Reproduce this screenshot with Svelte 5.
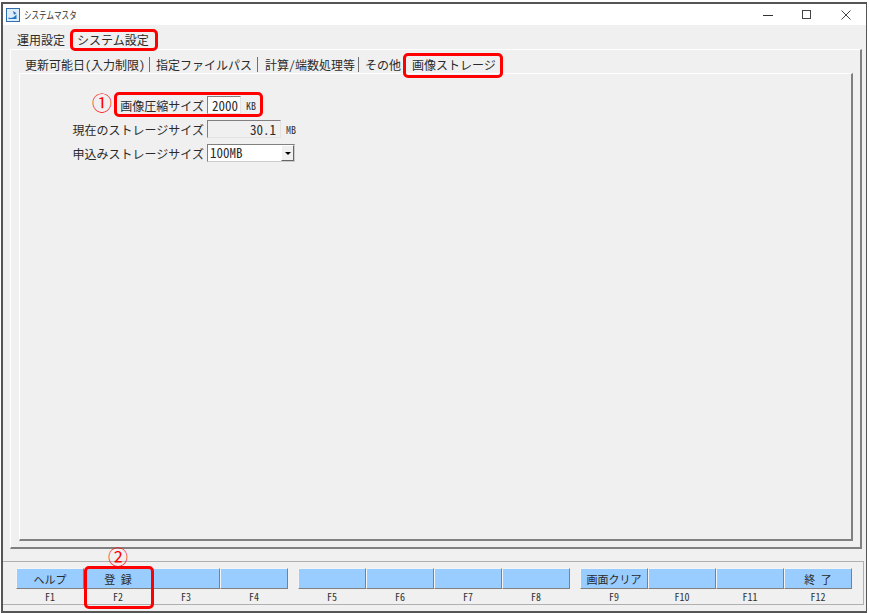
<script lang="ts">
  const outerTabs = ["運用設定", "システム設定"];
  const innerTabs = ["更新可能日(入力制限)", "指定ファイルパス", "計算/端数処理等", "その他", "画像ストレージ"];
  const fnGroups = [
    [{ key: "F1", label: "ヘルプ" }, { key: "F2", label: "登　録" }, { key: "F3", label: "" }, { key: "F4", label: "" }],
    [{ key: "F5", label: "" }, { key: "F6", label: "" }, { key: "F7", label: "" }, { key: "F8", label: "" }],
    [{ key: "F9", label: "画面クリア" }, { key: "F10", label: "" }, { key: "F11", label: "" }, { key: "F12", label: "終　了" }],
  ];
</script>

<div class="window">
  <header class="titlebar">
    <svg class="app-icon" width="14" height="14" viewBox="0 0 14 14" aria-hidden="true">
      <rect x="0.5" y="0.5" width="13" height="13" fill="#dcecf8" stroke="#2f6fb0" />
      <path d="M7 3l3.5 2.2-2.5 1.6z" fill="#2f6fb0" />
      <path d="M2.5 9.5c2.5 1 5 .5 8-3v4.5h-8z" fill="#1e78c8" />
    </svg>
    <span class="title">システムマスタ</span>
    <div class="controls">
      <svg width="12" height="12" viewBox="0 0 12 12" aria-hidden="true"><path d="M1 6.5h10" stroke="#333" /></svg>
      <svg width="12" height="12" viewBox="0 0 12 12" aria-hidden="true"><rect x="1.5" y="1.5" width="8" height="8" fill="none" stroke="#444" /></svg>
      <svg width="12" height="12" viewBox="0 0 12 12" aria-hidden="true"><path d="M1.5 1.5l9 9M10.5 1.5l-9 9" stroke="#444" fill="none" /></svg>
    </div>
  </header>

  <main class="body">
    <nav class="outer-tabs">
      {#each outerTabs as tab}
        <span class="outer-tab">{tab}</span>
      {/each}
    </nav>

    <section class="outer-panel">
      <nav class="inner-tabs">
        {#each innerTabs as tab}
          <span class="inner-tab">{tab}</span>
        {/each}
      </nav>

      <div class="inner-panel">
        <div class="form">
          <span class="label">画像圧縮サイズ</span>
          <div class="field-row">
            <span class="input size-input">2000</span>
            <span class="unit">KB</span>
          </div>
          <span class="label">現在のストレージサイズ</span>
          <div class="field-row">
            <span class="input readonly">30.1</span>
            <span class="unit">MB</span>
          </div>
          <span class="label">申込みストレージサイズ</span>
          <div class="select">
            <span class="select-value">100MB</span>
            <span class="select-btn"><i class="arrow"></i></span>
          </div>
        </div>
      </div>
    </section>

    <footer class="fn-bar">
      {#each fnGroups as group}
        <div class="fn-group">
          {#each group as fn}
            <div class="fn">
              <button class="fn-btn">{fn.label}</button>
              <span class="fn-key">{fn.key}</span>
            </div>
          {/each}
        </div>
      {/each}
    </footer>
  </main>

  <!-- red annotations on top of the screen -->
  <span class="mark mark-outer"></span>
  <span class="mark mark-inner"></span>
  <span class="mark mark-field"></span>
  <span class="mark mark-fn"></span>
  <span class="num num-1">①</span>
  <span class="num num-2">②</span>
</div>

<style>
  :global(body) {
    margin: 0;
    background: #fff;
  }

  .window {
    position: relative;
    box-sizing: border-box;
    width: 866px;
    height: 611px;
    margin: 2px 0 0 1px;
    border: 2px solid #555;
    border-right-width: 1px;
    background: #f0f0f0;
    font-family: "Noto Sans CJK JP", sans-serif;
    font-feature-settings: "hwid";
    font-size: 12px;
    color: #2a2a2a;
    display: flex;
    flex-direction: column;
    overflow: hidden;
  }

  .titlebar {
    height: 21px;
    padding-left: 3px;
    background: #fff;
    display: flex;
    align-items: center;
    flex-shrink: 0;
  }

  .title {
    margin-left: 4px;
    font-size: 10.5px;
    color: #333;
    transform: scaleX(0.72);
    transform-origin: left center;
  }

  .controls {
    margin-left: auto;
    margin-right: 14px;
    display: flex;
    gap: 27px;
    align-items: center;
  }

  .body {
    flex: 1;
    display: flex;
    flex-direction: column;
    min-height: 0;
  }

  .outer-tabs {
    height: 24px;
    padding-left: 8px;
    display: flex;
    align-items: flex-end;
    flex-shrink: 0;
  }

  .outer-tab {
    height: 20px;
    line-height: 22px;
    padding: 0 6px;
  }

  .outer-panel {
    box-sizing: border-box;
    height: 500px;
    margin: 0 4px 0 7px;
    padding: 0 7px 6px 8px;
    border-top: 1px solid #fff;
    border-left: 1px solid #fff;
    border-right: 2px solid #808080;
    border-bottom: 2px solid #808080;
    display: flex;
    flex-direction: column;
  }

  .inner-tabs {
    height: 23px;
    display: flex;
    align-items: flex-end;
    flex-shrink: 0;
  }

  .inner-tab {
    height: 15px;
    line-height: 15px;
    margin-bottom: 1px;
    padding: 0 5px 0 6px;
    border-right: 1px solid #707070;
  }

  .inner-tab:nth-child(1) {
    padding-right: 4px;
  }

  .inner-tab:nth-child(3) {
    padding: 0 3px 0 7px;
  }

  .inner-tab:nth-child(4) {
    padding: 0 4px 0 6px;
    border-right: none;
  }

  .inner-tab:nth-child(5) {
    padding-left: 7px;
    border-right: none;
  }

  .inner-panel {
    flex: 1;
    min-height: 0;
    border-top: 1px solid #fff;
    border-left: 1px solid #fff;
    border-right: 2px solid #808080;
    border-bottom: 2px solid #808080;
    padding-top: 22px;
  }

  .form {
    display: grid;
    grid-template-columns: 184px auto;
    grid-auto-rows: 18px;
    row-gap: 6px;
    column-gap: 3px;
    justify-content: start;
    align-items: center;
  }

  .label {
    text-align: right;
    white-space: nowrap;
  }

  .field-row {
    display: flex;
    align-items: center;
    gap: 5px;
  }

  .input {
    box-sizing: border-box;
    height: 18px;
    line-height: 17px;
    padding: 0 2px 0 4px;
    background: #fff;
    border-top: 1px solid #808080;
    border-left: 1px solid #808080;
    border-right: 1px solid #e3e3e3;
    border-bottom: 1px solid #e3e3e3;
    font-size: 13px;
  }

  .size-input {
    width: 34px;
  }

  .readonly {
    width: 74px;
    padding-right: 4px;
    background: #f0f0f0;
    text-align: right;
  }

  .unit {
    font-size: 10px;
    color: #333;
  }

  .select {
    box-sizing: border-box;
    width: 88px;
    height: 18px;
    background: #fff;
    border-top: 1px solid #808080;
    border-left: 1px solid #808080;
    border-right: 1px solid #ccc;
    border-bottom: 1px solid #ccc;
    display: flex;
    justify-content: space-between;
    font-size: 13px;
    line-height: 16px;
    padding-left: 2px;
  }

  .select-btn {
    box-sizing: border-box;
    width: 13px;
    background: #f0f0f0;
    border-top: 1px solid #fff;
    border-left: 1px solid #fff;
    border-right: 1px solid #666;
    border-bottom: 1px solid #666;
    display: flex;
    align-items: center;
    justify-content: center;
  }

  .arrow {
    width: 0;
    height: 0;
    border-left: 3px solid transparent;
    border-right: 3px solid transparent;
    border-top: 3px solid #000;
  }

  .fn-bar {
    box-sizing: border-box;
    height: 44px;
    margin: 12px 2px 0 0;
    padding: 6px 0 0 13px;
    border-top: 1px solid #b0b0b0;
    border-bottom: 1px solid #b0b0b0;
    border-right: 1px solid #b0b0b0;
    display: flex;
    gap: 10px;
    flex-shrink: 0;
  }

  .fn-group {
    display: flex;
  }

  .fn {
    width: 68px;
    display: flex;
    flex-direction: column;
    align-items: center;
  }

  .fn-btn {
    box-sizing: border-box;
    width: 100%;
    height: 21px;
    padding: 0;
    background: #99ccff;
    border: none;
    border-top: 1px solid #f4f4f4;
    border-left: 1px solid #f4f4f4;
    border-right: 1px solid #808080;
    border-bottom: 1px solid #808080;
    font: inherit;
    font-size: 11px;
    line-height: 18px;
    color: #2a2a2a;
  }

  .fn-key {
    margin-top: 1px;
    font-size: 10px;
    line-height: 14px;
    color: #333;
  }

  .mark {
    position: absolute;
    box-sizing: border-box;
    border: 3px solid #f00;
    border-radius: 5px;
  }

  .mark-outer {
    left: 67px;
    top: 25px;
    width: 88px;
    height: 22px;
  }

  .mark-inner {
    left: 400px;
    top: 49px;
    width: 100px;
    height: 25px;
  }

  .mark-field {
    left: 111px;
    top: 88px;
    width: 149px;
    height: 25px;
  }

  .mark-fn {
    left: 81px;
    top: 562px;
    width: 70px;
    height: 43px;
  }

  .num {
    position: absolute;
    color: #f00;
    font-size: 20px;
    line-height: 20px;
  }

  .num-1 {
    left: 89px;
    top: 89px;
  }

  .num-2 {
    left: 105px;
    top: 543px;
  }
</style>
